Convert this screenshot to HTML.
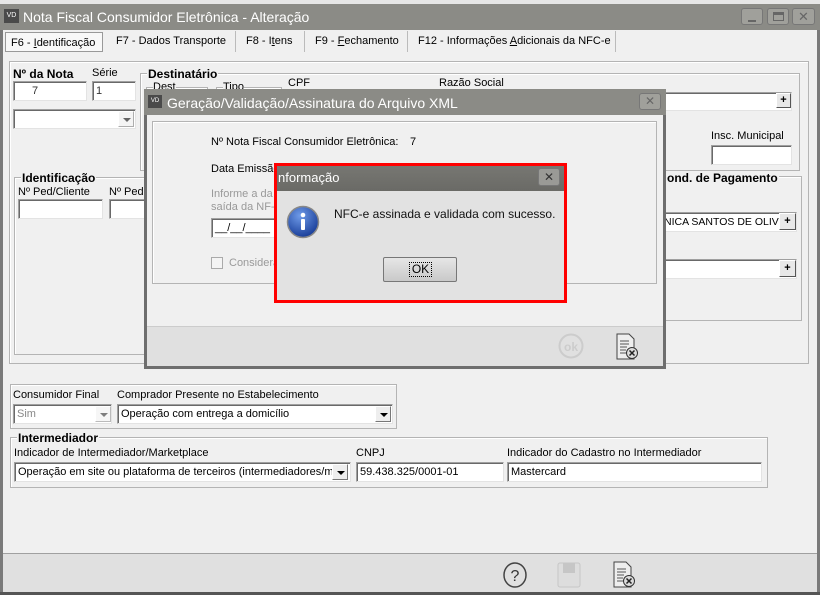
<!DOCTYPE html>
<html><head><meta charset="utf-8"><style>
*{box-sizing:border-box;margin:0;padding:0}
body{width:820px;height:595px;position:relative;overflow:hidden;background:#f0f0f0;font-family:"Liberation Sans","DejaVu Sans",sans-serif;font-size:11px;color:#000}
.a{position:absolute;white-space:nowrap}
.inp{position:absolute;background:#fff;border:1px solid #a0a0a0;border-right-color:#e3e3e3;border-bottom-color:#e3e3e3;box-shadow:inset 1px 1px 0 #696969;font-size:11px;padding:3px 3px;white-space:nowrap;overflow:hidden}
.grp{position:absolute;border:1px solid #b4b4b4;box-shadow:inset 1px 1px 0 #fff}
.gl{position:absolute;background:#f0f0f0;font-weight:bold;font-size:12px;padding:0 1px;color:#000;white-space:nowrap}
.btn{position:absolute;width:17px;height:17px;background:#e8e8e8;border:1px solid #fff;border-right-color:#555;border-bottom-color:#555;font-weight:bold;font-size:12px;text-align:center;line-height:14px}
.dd{position:absolute;width:16px;height:16px;border:1px solid #fff;border-right-color:#777;border-bottom-color:#777;background:#eee;}
.dd:after{content:"";position:absolute;left:4px;top:6px;border:4px solid transparent;border-top:4px solid #000}
.tb{position:absolute;border:1px solid #777;border-radius:3px;background:#a0a09b}
.tab{position:absolute;top:35px;font-size:11px;white-space:nowrap}
</style></head><body>
<div class="a" style="left:0;top:0;width:820px;height:4px;background:#e6e6e6"></div>
<div class="a" style="left:0;top:4px;width:820px;height:26px;background:#8b8b86"></div>
<div class="a" style="left:4px;top:9px;width:15px;height:14px;background:#4a4a4a;color:#fff;font-size:7px;line-height:14px;text-align:center">VD</div>
<div class="a" style="left:23px;top:9px;font-size:14px;color:#fff">Nota Fiscal Consumidor Eletrônica - Alteração</div>
<div class="tb" style="left:741px;top:8px;width:22px;height:17px"><div class="a" style="left:6px;top:11px;width:8px;height:2px;background:#666"></div></div>
<div class="tb" style="left:767px;top:8px;width:22px;height:17px"><div class="a" style="left:5px;top:3px;width:11px;height:9px;border:1px solid #666;border-top-width:3px"></div></div>
<div class="tb" style="left:792px;top:8px;width:23px;height:17px;text-align:center;color:#666;font-weight:bold;font-size:13px;line-height:15px">✕</div>
<div class="a" style="left:0;top:30px;width:3px;height:565px;background:#7a7a7a"></div>
<div class="a" style="left:817px;top:30px;width:3px;height:565px;background:#7a7a7a"></div>
<div class="a" style="left:0;top:592px;width:820px;height:3px;background:#555"></div>
<!-- tabs -->
<div class="a" style="left:5px;top:32px;width:98px;height:20px;background:#f8f8f8;border:1px solid #999;font-size:11px;padding:4px 5px">F6 - <u>I</u>dentificação</div>
<div class="tab" style="left:116px">F7 - Dados Transporte</div>
<div class="a" style="left:235px;top:31px;width:1px;height:21px;background:#bbb"></div>
<div class="tab" style="left:246px">F8 - I<u>t</u>ens</div>
<div class="a" style="left:304px;top:31px;width:1px;height:21px;background:#bbb"></div>
<div class="tab" style="left:315px">F9 - <u>F</u>echamento</div>
<div class="a" style="left:407px;top:31px;width:1px;height:21px;background:#bbb"></div>
<div class="tab" style="left:418px">F12 - Informações <u>A</u>dicionais da NFC-e</div>
<div class="a" style="left:615px;top:31px;width:1px;height:21px;background:#bbb"></div>
<div class="grp" style="left:9px;top:61px;width:800px;height:303px"></div>
<div class="a" style="left:13px;top:67px;font-weight:bold;font-size:12px">Nº da Nota</div>
<div class="a" style="left:92px;top:67px">Série</div>
<div class="inp" style="left:13px;top:81px;width:74px;height:20px;padding-left:18px;color:#333">7</div>
<div class="inp" style="left:92px;top:81px;width:44px;height:20px;color:#333">1</div>
<div class="inp" style="left:13px;top:109px;width:123px;height:20px"></div>
<div class="dd" style="left:118px;top:111px;opacity:.6"></div>
<div class="grp" style="left:140px;top:73px;width:660px;height:98px"></div>
<div class="gl" style="left:147px;top:67px">Destinatário</div>
<div class="grp" style="left:146px;top:87px;width:62px;height:10px"></div>
<div class="a" style="left:153px;top:81px;background:#f0f0f0">Dest</div>
<div class="grp" style="left:216px;top:87px;width:66px;height:10px"></div>
<div class="a" style="left:223px;top:81px;background:#f0f0f0">Tipo</div>
<div class="a" style="left:288px;top:77px">CPF</div>
<div class="a" style="left:439px;top:77px">Razão Social</div>
<div class="inp" style="left:660px;top:92px;width:132px;height:19px"></div>
<div class="btn" style="left:776px;top:93px;width:15px;height:15px;font-size:11px;line-height:12px">+</div>
<div class="a" style="left:711px;top:130px">Insc. Municipal</div>
<div class="inp" style="left:711px;top:145px;width:81px;height:20px"></div>
<div class="grp" style="left:14px;top:177px;width:140px;height:178px"></div>
<div class="gl" style="left:21px;top:171px">Identificação</div>
<div class="a" style="left:18px;top:186px">Nº Ped/Cliente</div>
<div class="a" style="left:109px;top:186px">Nº Pedi</div>
<div class="inp" style="left:18px;top:199px;width:85px;height:20px"></div>
<div class="inp" style="left:109px;top:199px;width:45px;height:20px"></div>
<div class="grp" style="left:640px;top:176px;width:162px;height:145px"></div>
<div class="gl" style="left:666px;top:171px">ond. de Pagamento</div>
<div class="inp" style="left:660px;top:212px;width:137px;height:20px;font-size:10.5px">NICA SANTOS DE OLIVE</div>
<div class="btn" style="left:779px;top:213px;font-size:11px;line-height:14px">+</div>
<div class="inp" style="left:660px;top:259px;width:137px;height:20px"></div>
<div class="btn" style="left:779px;top:260px;font-size:11px;line-height:14px">+</div>
<div class="grp" style="left:10px;top:384px;width:387px;height:45px"></div>
<div class="a" style="left:13px;top:389px">Consumidor Final</div>
<div class="a" style="left:117px;top:389px">Comprador Presente no Estabelecimento</div>
<div class="inp" style="left:13px;top:404px;width:99px;height:20px;color:#888">Sim</div>
<div class="dd" style="left:95px;top:406px;opacity:.5"></div>
<div class="inp" style="left:117px;top:404px;width:276px;height:20px">Operação com entrega a domicílio</div>
<div class="dd" style="left:375px;top:406px"></div>
<div class="grp" style="left:10px;top:437px;width:758px;height:51px"></div>
<div class="gl" style="left:17px;top:431px">Intermediador</div>
<div class="a" style="left:14px;top:447px">Indicador de Intermediador/Marketplace</div>
<div class="a" style="left:356px;top:447px">CNPJ</div>
<div class="a" style="left:507px;top:447px">Indicador do Cadastro no Intermediador</div>
<div class="inp" style="left:14px;top:462px;width:337px;height:20px">Operação em site ou plataforma de terceiros (intermediadores/ma</div>
<div class="dd" style="left:332px;top:464px"></div>
<div class="inp" style="left:356px;top:462px;width:148px;height:20px">59.438.325/0001-01</div>
<div class="inp" style="left:507px;top:462px;width:255px;height:20px">Mastercard</div>
<div class="a" style="left:3px;top:553px;width:814px;height:39px;background:#e0e0e0;border-top:1px solid #a0a0a0"></div>
<svg class="a" style="left:502px;top:561px" width="26" height="28"><ellipse cx="13" cy="14" rx="11" ry="12" fill="none" stroke="#444" stroke-width="1.5"/><text x="13" y="20" font-size="16" text-anchor="middle" fill="#333" font-family="Liberation Sans">?</text></svg>
<svg class="a" style="left:557px;top:562px" width="24" height="26"><rect x="1" y="1" width="22" height="24" rx="2" fill="#ddd" stroke="#c6c6c6"/><rect x="6" y="1" width="12" height="10" fill="#c6c6c6"/></svg>
<svg class="a" style="left:612px;top:561px" width="24" height="28"><path d="M2 1h12l5 5v20H2z" fill="#eee" stroke="#444"/><path d="M5 8h9M5 11h9M5 14h7M5 17h6M5 20h6" stroke="#555"/><circle cx="17" cy="20" r="5.5" fill="#ddd" stroke="#333"/><path d="M14.5 17.5l5 5M19.5 17.5l-5 5" stroke="#222" stroke-width="1.5"/></svg>
<!-- XML modal -->
<div class="a" style="left:144px;top:89px;width:522px;height:280px;background:#f0f0f0;border:3px solid #6e6e6e;border-top:0"></div>
<div class="a" style="left:144px;top:89px;width:522px;height:26px;background:#8b8b86"></div>
<div class="a" style="left:148px;top:95px;width:14px;height:13px;background:#4a4a4a;color:#fff;font-size:6px;line-height:13px;text-align:center">VD</div>
<div class="a" style="left:167px;top:95px;font-size:14px;color:#fff">Geração/Validação/Assinatura do Arquivo XML</div>
<div class="tb" style="left:639px;top:93px;width:22px;height:17px;text-align:center;color:#666;font-weight:bold;font-size:12px;line-height:15px">✕</div>
<div class="grp" style="left:152px;top:121px;width:505px;height:163px"></div>
<div class="a" style="left:211px;top:136px">Nº Nota Fiscal Consumidor Eletrônica:</div>
<div class="a" style="left:410px;top:136px">7</div>
<div class="a" style="left:211px;top:163px">Data Emissão</div>
<div class="a" style="left:211px;top:188px;color:#999;line-height:13px">Informe a da<br>saída da NF-</div>
<div class="inp" style="left:211px;top:218px;width:70px;height:20px">__/__/____</div>
<div class="a" style="left:211px;top:257px;width:12px;height:12px;border:1px solid #aaa;background:#f4f4f4"></div>
<div class="a" style="left:229px;top:257px;color:#999">Considera</div>
<div class="a" style="left:147px;top:326px;width:516px;height:40px;background:#e0e0e0;border-top:1px solid #ccc"></div>
<svg class="a" style="left:558px;top:333px" width="26" height="26"><circle cx="13" cy="13" r="11.5" fill="none" stroke="#ccc" stroke-width="2"/><text x="13" y="18" font-size="12" font-weight="bold" text-anchor="middle" fill="#ccc" font-family="Liberation Sans">ok</text></svg>
<svg class="a" style="left:615px;top:333px" width="24" height="28"><path d="M2 1h12l5 5v20H2z" fill="#eee" stroke="#444"/><path d="M5 8h9M5 11h9M5 14h7M5 17h6M5 20h6" stroke="#555"/><circle cx="17" cy="20" r="5.5" fill="#ddd" stroke="#333"/><path d="M14.5 17.5l5 5M19.5 17.5l-5 5" stroke="#222" stroke-width="1.5"/></svg>
<!-- info dialog -->
<div class="a" style="left:274px;top:163px;width:293px;height:140px;border:3px solid #f00;background:#e2e2e2"></div>
<div class="a" style="left:277px;top:166px;width:287px;height:25px;background:linear-gradient(#777772,#6a6a66)"></div>
<div class="a" style="left:278px;top:170px;font-size:13px;color:#fff">nformação</div>
<div class="tb" style="left:538px;top:168px;width:22px;height:18px;background:#9a9a96;text-align:center;color:#333;font-weight:bold;font-size:12px;line-height:16px">✕</div>
<svg class="a" style="left:286px;top:205px" width="34" height="34"><defs><radialGradient id="g" cx="40%" cy="30%" r="70%"><stop offset="0" stop-color="#6f9be8"/><stop offset="1" stop-color="#1a3f9a"/></radialGradient></defs><circle cx="17" cy="17" r="15.5" fill="url(#g)" stroke="#888" stroke-width="1.5"/><circle cx="17" cy="10" r="2.3" fill="#fff"/><rect x="15" y="14" width="4" height="11" rx="1" fill="#fff"/></svg>
<div class="a" style="left:334px;top:207px;font-size:12px;color:#111">NFC-e assinada e validada com sucesso.</div>
<div class="a" style="left:383px;top:257px;width:74px;height:25px;border:1px solid #777;border-radius:2px;background:linear-gradient(#e6e6e6,#c9c9c9)"></div>
<div class="a" style="left:409px;top:262px;width:23px;height:15px;border:1px dotted #000;font-size:12px;text-align:center;line-height:13px">OK</div>
</body></html>
